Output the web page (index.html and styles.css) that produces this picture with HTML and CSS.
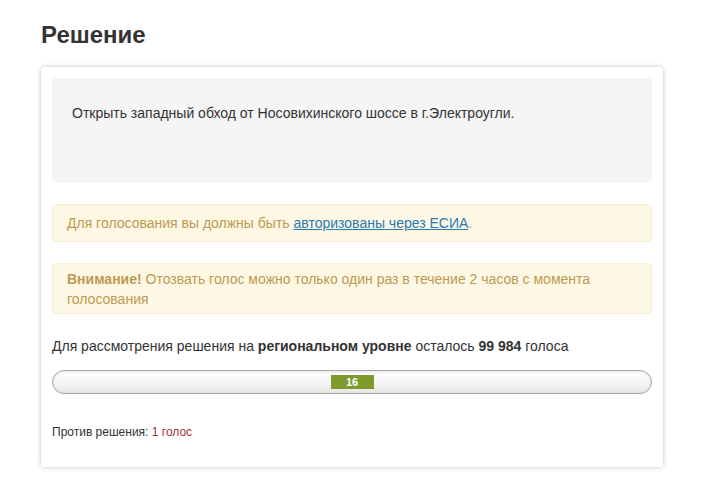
FILE: index.html
```html
<html>
<link rel="stylesheet" href="styles.css">

<head>
    <title>Решение</title>
</head>

<body>
    <h1 class="titulo">Решение</h1>
    <div class="cartao">
        <div class="poco">Открыть западный обход от Носовихинского шоссе в г.Электроугли.</div>

        <div class="alerta alerta-um">Для голосования вы должны быть <a href="#">авторизованы через ЕСИА</a>.</div>

        <div class="alerta alerta-dois"><b>Внимание!</b> Отозвать голос можно только один раз в течение 2 часов с момента голосования</div>

        <p class="restante">Для рассмотрения решения на <b>региональном уровне</b> осталось <b>99 984</b> голоса</p>

        <div class="barra">
            <span class="contagem">16</span>
        </div>

        <p class="contra">Против решения: <span class="votos">1 голос</span></p>
    </div>
</body>

</html>
```

FILE: styles.css
```css
body {
    margin: 0;
    padding: 0 39px 0 41px;
    font-family: "Liberation Sans", Arial, sans-serif;
    font-size: 14px;
    color: #333;
    background-color: #fff;
}

.titulo {
    margin: 0;
    padding-top: 20px;
    height: 67px;
    box-sizing: border-box;
    font-size: 24px;
    line-height: 30px;
    font-weight: bold;
    color: #333;
}

.cartao {
    width: 622px;
    box-sizing: border-box;
    padding: 11px 11px 0 11px;
    height: 400px;
    border-radius: 4px;
    background: #fff;
    box-shadow: 0 0 5px rgba(0, 0, 0, 0.25);
}

.poco {
    height: 105px;
    box-sizing: border-box;
    padding: 25px 20px;
    line-height: 20px;
    background-color: #f5f5f5;
    border-radius: 4px;
}

.alerta {
    margin-top: 21px;
    padding: 8px 14px;
    line-height: 20px;
    color: #c09853;
    background-color: #fcf8e3;
    border: 1px solid #fbeed5;
    border-radius: 4px;
}

.alerta-dois {
    padding-top: 5px;
    padding-bottom: 4px;
}

.alerta a {
    color: #2a7ab3;
    text-decoration: underline;
}

.restante {
    margin: 22px 0 0 0;
    line-height: 20px;
}

.barra {
    margin-top: 14px;
    height: 24px;
    box-sizing: border-box;
    border: 1px solid #a8a8a8;
    border-radius: 12px;
    background: linear-gradient(#ffffff, #f4f4f4 60%, #e6e6e6);
    box-shadow: inset 0 1px 3px rgba(0, 0, 0, 0.12);
    display: flex;
    justify-content: center;
    align-items: center;
}

.contagem {
    width: 43px;
    height: 14px;
    line-height: 14px;
    text-align: center;
    background-color: #7d9a2b;
    color: #fff;
    font-size: 11px;
    font-weight: bold;
}

.contra {
    margin: 30px 0 0 0;
    font-size: 12px;
    line-height: 16px;
}

.votos {
    color: #a3333a;
}
```
